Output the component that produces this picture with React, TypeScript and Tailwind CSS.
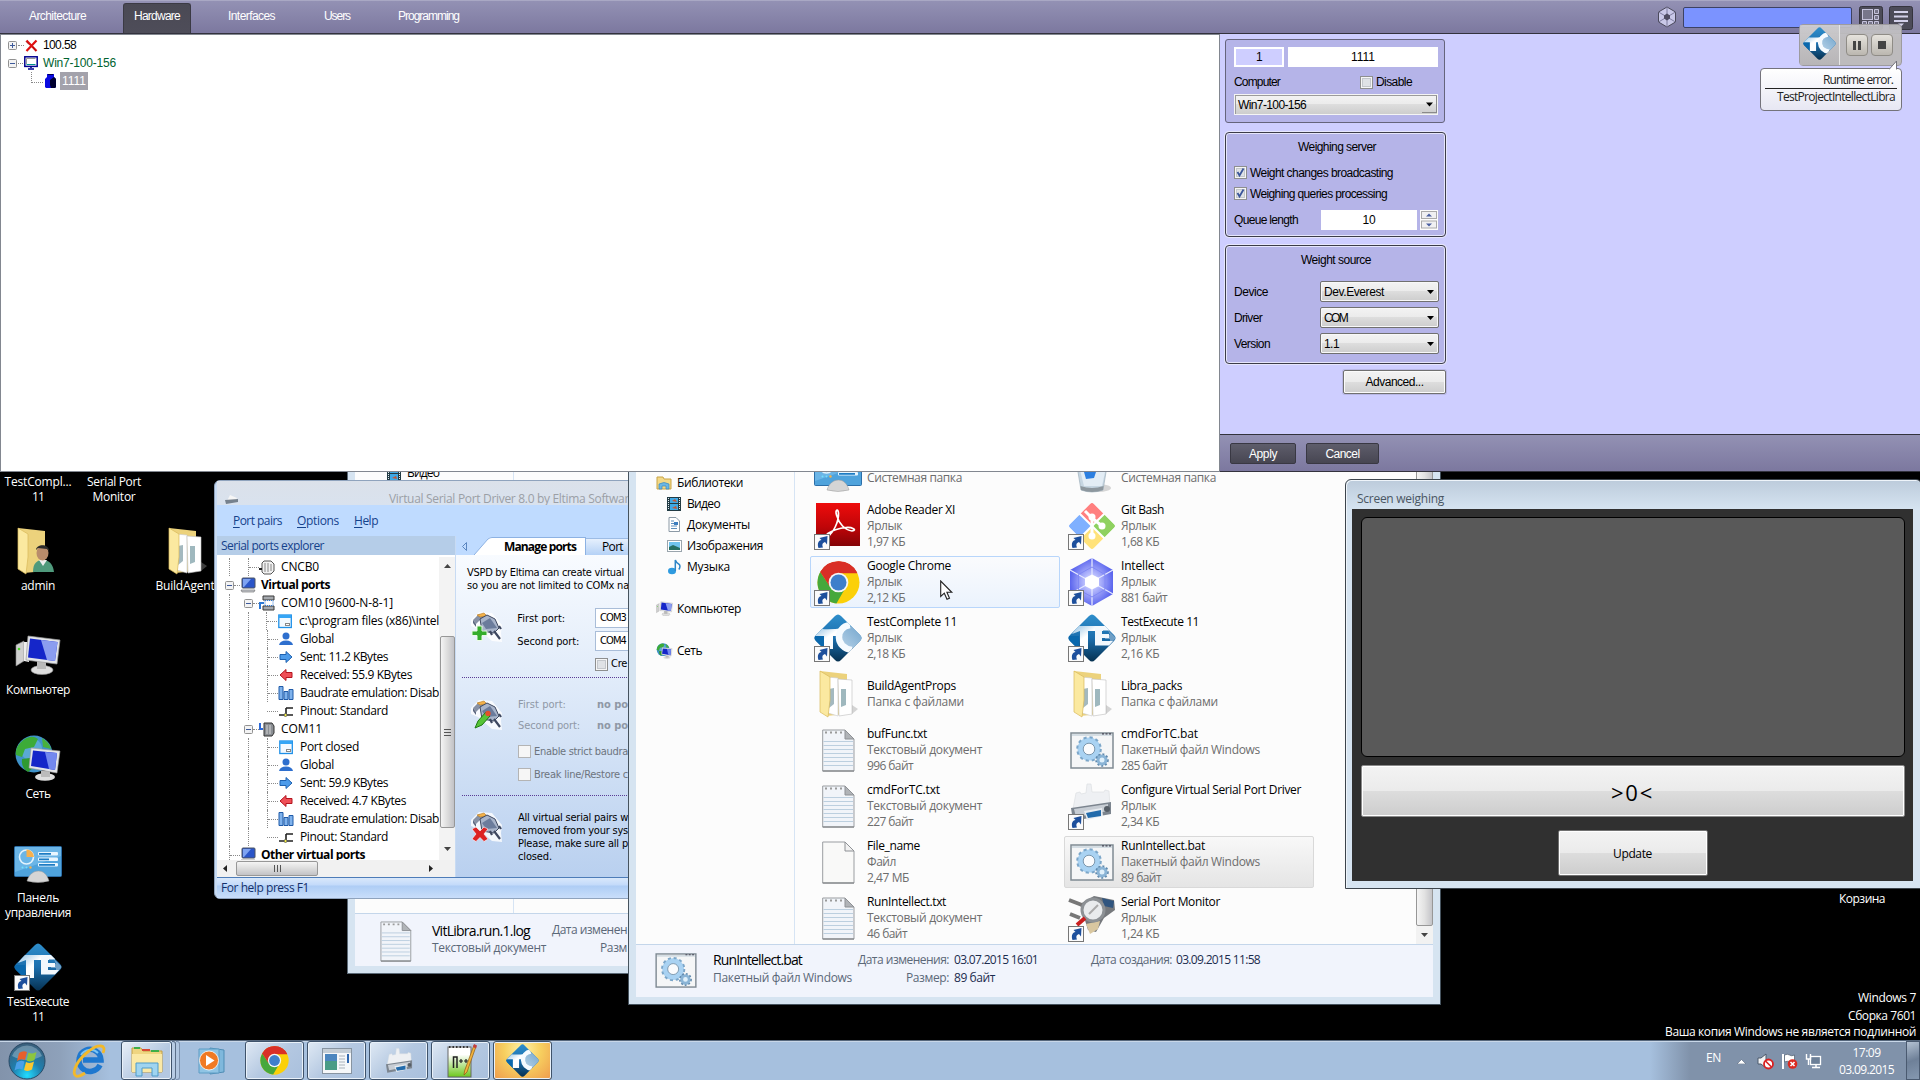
import React, { useLayoutEffect, useRef } from "react";

/* Text run whose tracking is adjusted so that it fills the width w. */
function T({ w, className = "", children }: { w: number; className?: string; children: string }) {
  const ref = useRef<HTMLSpanElement>(null);
  useLayoutEffect(() => {
    const el = ref.current;
    if (!el) return;
    el.style.letterSpacing = "0px";
    const natural = el.getBoundingClientRect().width;
    el.style.letterSpacing = `${(w - natural) / children.length}px`;
  }, [w, children]);
  return (
    <span ref={ref} className={`inline-block shrink-0 whitespace-pre ${className}`}>
      {children}
    </span>
  );
}

/* ---------- icons ---------- */

function Shortcut({ y = 33 }: { y?: number }) {
  return (
    <g transform={`translate(0.5 ${y - 0.5})`}>
      <rect width="15" height="15" fill="#fbfbfb" stroke="#777" />
      <path d="M4 13.500C2.500 9 4 6 7 5.500L5 3.500l8-2-.5 8.500-2-2.500C7.500 8.500 7.500 10.500 8.500 13z" fill="#1d4f9c" />
    </g>
  );
}

function TcLogo({ x = 0, y = 0, s = 48, letter = "C" }: { x?: number; y?: number; s?: number; letter?: "C" | "E" }) {
  return (
    <svg x={x} y={y} width={s} height={s} viewBox="0 0 48 48" className="shrink-0">
      <defs>
        <linearGradient id="tcg" x1="0" y1="0" x2="0" y2="1">
          <stop offset="0" stopColor="#2f8fcc" />
          <stop offset=".5" stopColor="#1c6fae" />
          <stop offset="1" stopColor="#06304f" />
        </linearGradient>
        <linearGradient id="tcw" x1="0" y1="0" x2="1" y2="1">
          <stop offset="0" stopColor="#8fbfe2" />
          <stop offset=".45" stopColor="#fff" />
          <stop offset="1" stopColor="#f4faff" />
        </linearGradient>
        <linearGradient id="tcr" x1="0" y1="1" x2="1" y2="0">
          <stop offset="0" stopColor="#b4d0e6" />
          <stop offset="1" stopColor="#6fa3cc" />
        </linearGradient>
        <clipPath id="tcc">
          <path d="M21 2Q24-1 27 2L46 21Q49 24 46 27L27 46Q24 49 21 46L2 27Q-1 24 2 21Z" />
        </clipPath>
      </defs>
      <g clipPath="url(#tcc)">
        <rect width="48" height="48" fill="url(#tcg)" />
        <path d="M0 22H11V36L0 26z" fill="#0a68ad" />
        {letter === "C" ? (
          <>
            <circle cx="39" cy="23" r="11" fill="url(#tcr)" />
            <path d="M0 22L8 15Q16 16 30 14L25 22H19V35H10V22Z" fill="url(#tcw)" />
            <path d="M36 11C21 13 21 34 38 36" fill="none" stroke="#f6fbff" strokeWidth="6.500" />
          </>
        ) : (
          <>
            <path d="M40 16L48 24 42 30V25H37V21H42z" fill="#6f9fc6" />
            <path d="M4 20L10 12H35V17H20V35H12V17Z" fill="url(#tcw)" />
            <path d="M27 12H41V16.500H34V20H41V24H34V27H45L41 31.500H27z" fill="#f2f8fd" />
          </>
        )}
      </g>
    </svg>
  );
}

function ChromeLogo({ x = 0, y = 0, s = 42 }: { x?: number; y?: number; s?: number }) {
  return (
    <svg x={x} y={y} width={s} height={s} viewBox="0 0 42 42" className="shrink-0">
      <circle cx="21" cy="21" r="20.500" fill="#fbd009" />
      <path d="M21 21L3.200 10.800A20.500 20.500 0 0 1 39.500 12H21z" fill="#d92f27" />
      <path d="M3.200 10.800A20.500 20.500 0 0 0 19 41.400L28 26 21 21 12 24z" fill="#46a83c" />
      <path d="M21 11.500H39.300A20.500 20.500 0 0 0 3.200 10.800L12.500 25z" fill="#d92f27" />
      <circle cx="21" cy="21" r="9.600" fill="#f4f6f8" />
      <circle cx="21" cy="21" r="7.800" fill="#3e7fcb" />
    </svg>
  );
}

function ControlPanelArt() {
  return (
    <g>
      <rect x=".5" y=".5" width="47" height="30" rx="1" fill="#4fa3dc" stroke="#2c6fa8" />
      <path d="M1 1H47V10L1 26z" fill="#7fc1ec" opacity=".6" />
      <circle cx="12.500" cy="11" r="7" fill="none" stroke="#e4f3fd" strokeWidth="1.600" />
      <path d="M12.500 11V3.500A7.500 7.500 0 0 1 20 11z" fill="#f6b04d" />
      <rect x="24" y="6" width="20" height="3.600" rx="1" fill="#e8f6ff" />
      <rect x="24" y="11.500" width="20" height="3.600" rx="1" fill="#e8f6ff" />
      <rect x="24" y="17" width="20" height="3.600" rx="1" fill="#e8f6ff" />
      <path d="M25 7.800H37M25 13.300H35M25 18.800H41" stroke="#1d7cc4" strokeWidth="1.800" />
      <circle cx="8.500" cy="21.500" r="1" fill="#6fe0ff" />
      <circle cx="12.500" cy="21.500" r="1" fill="#6fe0ff" />
      <circle cx="16.500" cy="21.500" r="1.200" fill="#f6b04d" />
      <path d="M13 35C15 28 20 25 24.500 25S33 28 35 35Q24 38 13 35z" fill="#d5d5d5" stroke="#999" strokeWidth=".5" />
    </g>
  );
}

function GearWindow({ w = 44, h = 37 }: { w?: number; h?: number }) {
  return (
    <svg width={w} height={h} viewBox="0 0 44 37" className="shrink-0">
      <rect x="1" y="1" width="42" height="35" fill="#f5f6f7" stroke="#7f8a93" strokeWidth="1.500" />
      <path d="M2 2H42V4H2z" fill="#d4dde3" />
      <path d="M32 1.800h2m1.500 0h2m1.500 0h2" stroke="#445" strokeWidth="1.200" />
      <circle cx="19" cy="17" r="8.500" fill="none" stroke="#a9d2f2" strokeWidth="6" />
      <circle cx="19" cy="17" r="11.800" fill="none" stroke="#7ba6c9" strokeWidth="2" strokeDasharray="3.200 3" />
      <circle cx="19" cy="17" r="5.800" fill="#fafbfd" stroke="#7c97ad" />
      <circle cx="32" cy="28" r="4" fill="#dff0fb" stroke="#8ab4d6" strokeWidth="3" />
      <circle cx="32" cy="28" r="6" fill="none" stroke="#5f89ad" strokeWidth="1.600" strokeDasharray="2 2" />
    </svg>
  );
}

function NotePage({ lines = true, w = 33, h = 43 }: { lines?: boolean; w?: number; h?: number }) {
  return (
    <svg width={w} height={h} viewBox="0 0 33 43" className="shrink-0">
      <path d="M.7 1H23L32 10V42H.7z" fill={lines ? "#f1f4f9" : "#f9f9f8"} stroke="#9a9da1" />
      {lines && (
        <>
          <path d="M1.500 12.500H31M1.500 16.500H31M1.500 20.500H31M1.500 24.500H31M1.500 28.500H31M1.500 32.500H31M1.500 36.500H31" stroke="#bccfdf" />
          <path d="M3 3.500H22" stroke="#9a9a9a" strokeWidth="2" strokeDasharray="2 3" />
        </>
      )}
      <path d="M23 1V10H32z" fill={lines ? "#b0b3b7" : "#f1f1f1"} stroke="#8e9195" />
      <path d="M.7 42H32" stroke="#85888c" strokeWidth="1.300" />
    </svg>
  );
}

function FolderOpen({ user = false }: { user?: boolean }) {
  return (
    <svg width="44" height="48" viewBox="0 0 44 48" className="shrink-0">
      <path d="M4 1L31 4V44L10 46z" fill="#ecd27c" />
      {!user && (
        <>
          <path d="M11 7L22 8V46L12 43z" fill="#fff" stroke="#c9c9c9" strokeWidth=".6" />
          <path d="M13 19L18 18V34L13 38z" fill="#a4b9bf" />
          <path d="M22 9L36 10V44L23 46z" fill="#fff" stroke="#bdbdbd" strokeWidth=".6" />
          <path d="M25 19L30 19V35L25 37z" fill="#9fb8be" />
          <path d="M36 44L42 39 36 35z" fill="#999" opacity=".4" />
        </>
      )}
      <path d="M4 1L14 7V30L12 47 4 42z" fill="#fbe9a0" stroke="#d9b95a" strokeWidth=".7" />
      {user && (
        <>
          <path d="M19 45C19 36 23 33 29 33S39 37 40 45z" fill="#4f9a7c" />
          <path d="M25 33L29 39 33 33z" fill="#eee" />
          <ellipse cx="28.500" cy="26" rx="6" ry="7.500" fill="#b98c6b" />
          <path d="M22 23C22 17 35 16 35 24L33 22 24 21z" fill="#2b2b2b" />
        </>
      )}
    </svg>
  );
}

function ComputerArt() {
  return (
    <g>
      <path d="M1 10L9 6V26L1 31z" fill="#cfcfcf" stroke="#888" strokeWidth=".6" />
      <path d="M9 7L14 7V27L9 26z" fill="#eee" />
      <circle cx="4" cy="14" r="1.300" fill="#4ed42c" />
      <ellipse cx="27" cy="35" rx="11" ry="4.500" fill="#dedede" stroke="#999" strokeWidth=".6" />
      <path d="M22 26H31V34H22z" fill="#b9b9b9" />
      <path d="M13 1L45 5 42 29 11 25z" fill="#e3e5e8" stroke="#9a9a9a" strokeWidth=".7" />
      <path d="M15 3.500L42.500 7 40 26 13 22.500z" fill="#1526c9" />
      <path d="M26 5L42.500 7 40 26 32 25z" fill="#8b9df0" />
    </g>
  );
}

function NetworkArt() {
  return (
    <g>
      <circle cx="20" cy="19" r="18.500" fill="#3f92c9" />
      <circle cx="17" cy="14" r="11" fill="#75bfe0" opacity=".5" />
      <path d="M6 8Q16-2 24 4L20 12 11 14 8 22 2 20Q1 14 6 8z" fill="#3cab38" />
      <path d="M28 3Q36 8 37 14L29 12z" fill="#48b03c" />
      <path d="M8 24L16 23 19 33 14 37Q7 33 8 24z" fill="#2f9a31" />
      <ellipse cx="31" cy="42" rx="10" ry="3.800" fill="#dedede" />
      <path d="M27 36H36V42H27z" fill="#bbb" />
      <path d="M17 13L46 16 43 38 15 33z" fill="#e3e5e8" stroke="#999" strokeWidth=".6" />
      <path d="M19 15.500L43 18 41 35 17 31z" fill="#1526c9" />
      <path d="M31 17L43 18 41 35 35 34z" fill="#7388ee" />
    </g>
  );
}

function SerialPlug({ kind }: { kind: "add" | "edit" | "del" }) {
  return (
    <svg width="33" height="33" viewBox="0 0 33 33" className="shrink-0">
      <path d="M1 9L9 1 22 2 32 14 31 22 32 31 22 30 8 18 1 15z" fill="#fff" opacity=".8" />
      <path d="M3 9L9 3 14 5 6 13z" fill="#8791a5" />
      <path d="M3 9L6 13V16L3 12z" fill="#5d6880" />
      <path d="M7 4L14 2 17 5 10 6z" fill="#f2b04a" stroke="#b97b1e" strokeWidth=".6" />
      <path d="M10 8L17 4 25 8 29 17 24 22 12 20z" fill="#a8b4ca" stroke="#3e4860" />
      <path d="M12 12L20 7 27 17 16 18z" fill="#6b7c9c" />
      <path d="M24 20L30 28M20 20L22 24M29 15L31 18" stroke="#3e4860" strokeWidth="2.200" />
      {kind === "add" && <path d="M7 15h5v5h5v4.500h-5v5H7v-5H2V20h5z" fill="#35ad2b" stroke="#eafbe6" />}
      {kind === "edit" && (
        <>
          <path d="M5 29L8 22 16 13 20 17 12 26z" fill="#57c437" stroke="#1f7a12" />
          <circle cx="18" cy="14.500" r="2.700" fill="#e2502a" />
        </>
      )}
      {kind === "del" && <path d="M2 18l4-2 4 4 4-4 4 2-4 5 4 5-4 2.500-4-4-4 4-4-2.500 4-5z" fill="#dc2222" stroke="#fff" strokeWidth=".6" />}
    </svg>
  );
}

function SerialArt() {
  return (
    <g>
      <path d="M19 2L23 2 24 10 36 10 37 8 41 9 42 25 5 27 8 11 12 10 13 12 18 11z" fill="#eef0f3" stroke="#dcdfe3" strokeWidth=".7" />
      <path d="M3 26L43 20V32L5 39z" fill="#7c858f" />
      <path d="M6 27L40 22V29L8 35z" fill="#c7cdd4" />
      <path d="M16 29L34 26 35 34 19 38z" fill="#e8ecf0" />
      <path d="M18 31L33 28 33 34 20 36z" fill="#236bab" />
      <circle cx="39" cy="27" r="3" fill="#555d66" />
    </g>
  );
}

function FileIcon({ kind }: { kind: string }) {
  if (kind === "folder") return <FolderOpen />;
  if (kind === "note") return <NotePage />;
  if (kind === "blank") return <NotePage lines={false} />;
  if (kind === "bat") return <GearWindow />;
  return (
    <svg width="48" height="48" viewBox="0 0 48 48" className="shrink-0">
      {kind === "cpl" && (
        <g transform="translate(0 9)">
          <ControlPanelArt />
        </g>
      )}
      {kind === "bin" && (
        <g>
          <ellipse cx="30" cy="42" rx="13" ry="4" fill="#bbb" opacity=".6" />
          <path d="M8 14H40L35 44Q24 48 13 44z" fill="#c6d6e2" stroke="#9fb0bc" strokeWidth=".7" />
          <path d="M12 24L24 17 37 26 34 40 16 40z" fill="#e3edf5" />
          <path d="M16 26l7-3 5 3-2 6-8 1z" fill="#2c7fe0" />
          <path d="M12.500 40Q24 44 35.500 40L35 44Q24 48 13 44z" fill="#8d979e" />
        </g>
      )}
      {kind === "adobe" && (
        <>
          <linearGradient id="adb" x1="0" y1="0" x2="0" y2="1">
            <stop offset="0" stopColor="#ee0c0c" />
            <stop offset=".55" stopColor="#c00508" />
            <stop offset="1" stopColor="#830306" />
          </linearGradient>
          <rect x="2" y="1" width="44" height="43" fill="url(#adb)" />
          <path d="M14 34C19 31 25 20 24.500 11C24 6 21 8 22.500 13C25 22 31 28 38 29C44 28 38 25 32 25.500C25 26 17 29 14 31.500C10 35 14 36 17 31" fill="none" stroke="#fff" strokeWidth="1.700" />
          <Shortcut />
        </>
      )}
      {kind === "chrome" && (
        <>
          <ChromeLogo x={3} y={3} s={43} />
          <Shortcut />
        </>
      )}
      {kind === "tc" && (
        <>
          <TcLogo />
          <Shortcut />
        </>
      )}
      {kind === "te" && (
        <>
          <TcLogo letter="E" />
          <Shortcut />
        </>
      )}
      {kind === "git" && (
        <>
          <clipPath id="gitc">
            <rect x="7" y="7" width="34" height="34" rx="3" transform="rotate(45 24 24)" />
          </clipPath>
          <g clipPath="url(#gitc)">
            <rect width="48" height="48" fill="#fff" />
            <g transform="rotate(45 24 24)">
              <rect x="7" y="7" width="16" height="16" fill="#ff8080" />
              <rect x="25" y="7" width="16" height="16" fill="#8fd160" />
              <rect x="7" y="25" width="16" height="16" fill="#7fb0ff" />
              <rect x="25" y="25" width="16" height="16" fill="#ffe27a" />
            </g>
            <path d="M17 9L24 16V34M24 16L34 24" stroke="#fff" strokeWidth="3" fill="none" />
            <circle cx="24" cy="15" r="3.500" fill="#fff" />
            <circle cx="24" cy="34" r="3.500" fill="#fff" />
            <circle cx="34" cy="24" r="3.500" fill="#fff" />
          </g>
          <Shortcut />
        </>
      )}
      {kind === "intellect" && (
        <>
          <radialGradient id="ing">
            <stop offset=".25" stopColor="#c3c7ff" />
            <stop offset="1" stopColor="#5c66ee" />
          </radialGradient>
          <path d="M24 0L45 12V36L24 48 2 36V12z" fill="url(#ing)" />
          <path d="M24 0V48M2 12L45 36M2 36L45 12" stroke="#e4e7ff" strokeWidth="1.300" />
          <path d="M24 9L37 16.500V31.500L24 39 10.500 31.500V16.500z" fill="none" stroke="#8088f4" />
          <path d="M24 16.500L31 20V28L24 31.500 17 28V20z" fill="#fff" />
          <Shortcut />
        </>
      )}
      {kind === "serial" && (
        <>
          <SerialArt />
          <Shortcut />
        </>
      )}
      {kind === "monitor" && (
        <>
          <path d="M12 10L26 2 46 6 47 16 36 24 28 38 20 36z" fill="#76797d" />
          <path d="M34 4L46 7 45 14 36 12z" fill="#30557f" />
          <path d="M1 6L14 11M2 20L12 24" stroke="#777" strokeWidth="4" />
          <path d="M18 30L32 27 30 35 22 40z" fill="#d9c7a0" />
          <circle cx="25" cy="16" r="11" fill="#e9ebed" stroke="#8d9195" strokeWidth="3" />
          <path d="M21 20L30 11" stroke="#aaa" strokeWidth="2" />
          <path d="M17 24L9 31" stroke="#c91e1e" strokeWidth="4" />
          <Shortcut />
        </>
      )}
    </svg>
  );
}

/* ---------- Intellect window ---------- */

const uiFont = "font-['Liberation_Sans',sans-serif] text-[12px]";
const segoe = "font-['Open_Sans','Noto_Sans',sans-serif] text-[12px]";
const btnGrad = "bg-[linear-gradient(#f3f3f3,#ebebeb_49%,#dddddd_50%,#cdcdcd)]";

function Box({ open }: { open: boolean }) {
  return (
    <svg width="9" height="9" viewBox="0 0 9 9" className="shrink-0">
      <rect x=".5" y=".5" width="8" height="8" rx="1" fill="#f3f3f3" stroke="#919191" />
      <path d={open ? "M2 4.500h5" : "M2 4.500h5M4.500 2v5"} stroke="#3d5a9b" />
    </svg>
  );
}

function Check({ on, flat }: { on?: boolean; flat?: boolean }) {
  return (
    <svg width="13" height="13" viewBox="0 0 13 13" className="shrink-0">
      <rect x=".5" y=".5" width="12" height="12" fill="#f6f6f6" stroke={flat ? "#b4b4b4" : "#8e8f8f"} />
      {!flat && <rect x="2.500" y="2.500" width="8" height="8" fill="#dfe2e6" stroke="#c3c7cc" />}
      {on && <path d="M3.500 6L5.500 9.500 9.500 2.500" fill="none" stroke="#3a559a" strokeWidth="1.800" />}
    </svg>
  );
}

function Combo({ text, w }: { text: string; w: number }) {
  return (
    <div className={`flex h-[21px] w-[119px] items-center justify-between rounded-[2px] border border-[#707070] pl-[3px] pr-1 shadow-[inset_0_0_0_1px_#f8f8f8] ${btnGrad}`}>
      <T w={w}>{text}</T>
      <svg width="7" height="4" viewBox="0 0 7 4">
        <path d="M0 0h7L3.500 4z" fill="#000" />
      </svg>
    </div>
  );
}

function IntellectWindow() {
  return (
    <div className={`absolute left-0 top-0 flex h-[472px] w-[1920px] flex-col ${uiFont}`}>
      <header className="flex h-[34px] items-start border-b border-[#33323d] border-t border-t-[#a9a8c4] bg-[linear-gradient(#9391b4,#7c789f)] text-white">
        <nav className="flex h-full">
          <div className="w-[123px] pl-[29px] pt-[6px]"><T w={57}>Architecture</T></div>
          <div className="mt-[2px] w-[68px] rounded-t-[3px] border border-b-0 border-[#3b3a44] bg-[linear-gradient(#4a4954,#4e4d59)] pl-[10px] pt-[3px]"><T w={46}>Hardware</T></div>
          <div className="pl-[37px] pt-[6px]"><T w={47}>Interfaces</T></div>
          <div className="pl-[49px] pt-[6px]"><T w={26}>Users</T></div>
          <div className="pl-[48px] pt-[6px]"><T w={61}>Programming</T></div>
        </nav>
        <div className="ml-auto flex items-start pr-[7px] pt-[5px]">
          <svg width="20" height="22" viewBox="0 0 20 22" className="mr-[6px]">
            <path d="M10 1L18.500 6V16L10 21 1.500 16V6z" fill="#c9c8e8" stroke="#4b4a5c" />
            <path d="M10 1V21M1.500 6L18.500 16M1.500 16L18.500 6" stroke="#7f7da0" />
            <path d="M10 7.500L13 9.500V12.500L10 14.500 7 12.500V9.500z" fill="#4e4c62" />
          </svg>
          <div className="mt-[1px] h-[21px] w-[169px] rounded-[2px] border border-[#3d4263] bg-[#7b93ff]" />
          <svg width="24" height="24" viewBox="0 0 24 24" className="ml-[7px]">
            <rect x=".5" y=".5" width="23" height="23" rx="2" fill="#4c4b58" stroke="#35343e" />
            <g fill="#77768a" stroke="#c5c3dc">
              <rect x="3.500" y="3.500" width="10" height="10" />
              <path d="M15.500 3.500h4v4h-4zM15.500 9.500h4v4h-4zM3.500 15.500h4v4h-4zM9.500 15.500h4v4h-4zM15.500 15.500h4v4h-4z" />
            </g>
          </svg>
          <svg width="24" height="24" viewBox="0 0 24 24" className="ml-[6px]">
            <rect x=".5" y=".5" width="23" height="23" rx="2" fill="#4c4b58" stroke="#35343e" />
            <path d="M5 6h14M5 10.500h14M5 15h14" stroke="#d3d1ea" strokeWidth="2" />
            <path d="M9 17.500h6L12 20.500z" fill="#d3d1ea" />
          </svg>
        </div>
      </header>
      <div className="flex h-[438px]">
        <div className="flex w-[1220px] flex-col border border-[#828790] bg-white pt-[1px]">
          <div className="flex h-[18px] items-center pl-[7px] text-black">
            <Box open={false} />
            <span className="mx-[1px] w-[6px] border-t border-dotted border-[#888]" />
            <svg width="13" height="13" viewBox="0 0 13 13" className="mr-[5px]">
              <path d="M1.500 1.500L11.500 12M11.500 1.500L1.500 12" stroke="#e01010" strokeWidth="2.200" />
              <path d="M1 2.500L4 5.500M8 8L11 12" stroke="#8c0808" strokeWidth=".7" />
            </svg>
            <T w={33}>100.58</T>
          </div>
          <div className="flex h-[18px] items-center pl-[7px] text-[#00632f]">
            <Box open />
            <span className="mx-[1px] w-[5px] border-t border-dotted border-[#888]" />
            <svg width="14" height="14" viewBox="0 0 14 14" className="mr-[5px]">
              <rect x=".8" y=".8" width="12.400" height="9.600" fill="#fff" stroke="#000090" strokeWidth="1.500" />
              <path d="M2.500 8.500h9" stroke="#009090" />
              <path d="M2.500 8V2.500h9" stroke="#999" fill="none" />
              <path d="M7 10v2M4 13h6" stroke="#000090" strokeWidth="1.600" />
            </svg>
            <T w={73}>Win7-100-156</T>
          </div>
          <div className="flex h-[18px] items-center pl-[30px]">
            <span className="mb-[7px] h-[11px] w-[12px] border-b border-l border-dotted border-[#888]" />
            <svg width="11" height="14" viewBox="0 0 11 14" className="ml-[2px]">
              <path d="M2 0h7v3l2 2v8l-1 1H1l-1-1V5l2-2z" fill="#0a0ae0" />
              <path d="M9 3l2 2v8l-1 1H6l-1-3V6z" fill="#00002e" />
              <path d="M3 .5h5" stroke="#000050" />
            </svg>
            <span className="ml-[4px] flex h-[18px] w-[28px] items-center justify-center bg-[#a3a2ab] text-white"><T w={24}>1111</T></span>
          </div>
        </div>
        <div className="flex flex-1 flex-col bg-[#ceceff] text-black">
          <div className="flex h-[400px] flex-col pl-[5px] pt-[5px]">
            <section className="flex h-[84px] w-[220px] flex-col rounded-[3px] border border-[#65647c] bg-[#b5b4e8] pl-[8px] pt-[7px]">
              <div className="flex gap-[4px]">
                <div className="flex h-[20px] w-[50px] items-center justify-center border-2 border-white bg-[#ceceff]"><T w={6}>1</T></div>
                <div className="flex h-[20px] w-[150px] items-center justify-center bg-white"><T w={24}>1111</T></div>
              </div>
              <div className="flex h-[27px] items-center pt-[3px]">
                <div className="w-[126px]"><T w={46}>Computer</T></div>
                <Check />
                <div className="pl-[3px]"><T w={36}>Disable</T></div>
              </div>
              <div className={`flex h-[21px] w-[204px] items-center border border-[#f4f4f4] pl-[3px] shadow-[inset_1px_1px_0_#9b9b9b] ${btnGrad}`}>
                <T w={68}>Win7-100-156</T>
                <span className="ml-auto flex h-[17px] w-[15px] items-center justify-center border-b border-r border-[#8a8a8a]">
                  <svg width="7" height="5" viewBox="0 0 7 4"><path d="M0 0h7L3.500 4z" /></svg>
                </span>
              </div>
            </section>
            <section className="mt-[9px] flex h-[105px] w-[221px] flex-col rounded-[4px] border border-[#3c3c48] bg-[#b5b4e8] pl-[8px] shadow-[inset_0_0_0_1px_#e6e6fb,0_0_0_1px_#e6e6fb]">
              <div className="mt-[7px] flex h-[14px] items-center justify-center pr-[5px]"><T w={78}>Weighing server</T></div>
              <div className="mt-[12px] flex h-[13px] items-center gap-[3px]"><Check on /><T w={143}>Weight changes broadcasting</T></div>
              <div className="mt-[8px] flex h-[13px] items-center gap-[3px]"><Check on /><T w={137}>Weighing queries processing</T></div>
              <div className="mt-[10px] flex h-[20px] items-center">
                <div className="w-[87px]"><T w={64}>Queue length</T></div>
                <div className="flex h-[20px] w-[96px] items-center justify-center bg-white"><T w={13}>10</T></div>
                <svg width="18" height="20" viewBox="0 0 18 20" className="ml-[3px]">
                  <rect width="18" height="20" fill="#fdfdfd" />
                  <rect x="1.500" y="1.500" width="15" height="7" fill="#f0f0f2" stroke="#aaa" />
                  <rect x="1.500" y="11" width="15" height="7" fill="#f0f0f2" stroke="#aaa" />
                  <path d="M6 6.500h6L9 3.500zM6 13.500h6L9 16.500z" fill="#4a5fa0" />
                </svg>
              </div>
            </section>
            <section className="mt-[8px] flex h-[119px] w-[221px] flex-col rounded-[4px] border border-[#3c3c48] bg-[#b5b4e8] pl-[8px] shadow-[inset_0_0_0_1px_#e6e6fb,0_0_0_1px_#e6e6fb]">
              <div className="mb-[14px] mt-[7px] flex h-[14px] items-center justify-center pr-[7px]"><T w={70}>Weight source</T></div>
              <div className="flex h-[26px]"><div className="w-[86px] pt-[2px]"><T w={34}>Device</T></div><Combo text="Dev.Everest" w={60} /></div>
              <div className="flex h-[26px]"><div className="w-[86px] pt-[2px]"><T w={28}>Driver</T></div><Combo text="COM" w={23} /></div>
              <div className="flex h-[26px]"><div className="w-[86px] pt-[2px]"><T w={36}>Version</T></div><Combo text="1.1" w={15} /></div>
            </section>
            <button className={`ml-[118px] mt-[6px] flex h-[24px] w-[103px] items-center justify-center rounded-[2px] border border-[#707070] shadow-[inset_0_0_0_1px_#fbfbfb,0_0_0_1px_#b9b8e4] ${btnGrad}`}><T w={58}>Advanced...</T></button>
          </div>
          <footer className="flex h-[38px] items-start gap-[10px] border-y border-t-[#33323d] border-b-[#33323d] bg-[linear-gradient(#9391b4,#7c789f)] pl-[10px] pt-[8px] text-white">
            <button className="flex h-[21px] w-[66px] items-center justify-center rounded-[2px] border border-[#393843] bg-[linear-gradient(#5e5d6b,#474652)]"><T w={28}>Apply</T></button>
            <button className="flex h-[21px] w-[73px] items-center justify-center rounded-[2px] border border-[#393843] bg-[linear-gradient(#5e5d6b,#474652)]"><T w={34}>Cancel</T></button>
          </footer>
        </div>
      </div>
    </div>
  );
}

function TestRunnerWidget() {
  return (
    <div className={`absolute left-[1760px] top-[24px] flex w-[142px] flex-col items-end ${segoe}`}>
      <div className="flex h-[42px] w-[103px] items-center rounded-[4px] border border-[#9d9b9e] bg-[linear-gradient(#c4c3c6e6,#bdbbbd_14px)]">
        <div className="flex h-full w-[40px] items-start justify-center border-r border-[#e6e6e6] bg-[linear-gradient(#d4d3d5a0,#b7b5b7)] pt-[2px]"><TcLogo s={33} /></div>
        <div className="flex gap-[3px] pl-[6px]">
          <span className="flex h-[22px] w-[22px] items-center justify-center gap-[2px] rounded-[4px] border border-[#8f8c86] bg-[linear-gradient(#e6e3dd,#bbb7b0)]">
            <i className="h-[9px] w-[3px] bg-[#444]" /><i className="h-[9px] w-[3px] bg-[#444]" />
          </span>
          <span className="flex h-[22px] w-[22px] items-center justify-center rounded-[4px] border border-[#8f8c86] bg-[linear-gradient(#e6e3dd,#bbb7b0)]"><i className="h-[8px] w-[8px] bg-[#444]" /></span>
        </div>
      </div>
      <div className="relative mt-[2px] flex h-[43px] w-[142px] flex-col items-end rounded-[4px] border border-[#74737b] bg-[linear-gradient(#ffffff,#e7e7f3)] px-[4px] text-[#222]">
        <svg width="9" height="9" viewBox="0 0 9 9" className="absolute -top-[8px] right-[3px]"><path d="M0 8.500L7.500 0V8.500" fill="#fff" stroke="#74737b" /></svg>
        <div className="flex h-[20px] w-full items-center justify-end border-b border-[#222] pr-[4px] pt-[2px]"><T w={70}>Runtime error.</T></div>
        <div className="flex h-[16px] items-center pr-[2px]"><T w={118}>TestProjectIntellectLibra</T></div>
      </div>
    </div>
  );
}

/* ---------- desktop ---------- */

function DesktopItem({ pos, lines, children }: { pos: string; lines: [string, number][]; children?: React.ReactNode }) {
  return (
    <div className={`absolute flex w-[76px] flex-col items-center text-white ${segoe} ${pos}`}>
      {children}
      {lines.map(([t, w]) => (
        <div key={t} className="h-[15px] leading-[15px]"><T w={w}>{t}</T></div>
      ))}
    </div>
  );
}

function Desktop() {
  return (
    <>
      <DesktopItem pos="left-[0px] top-[474px]" lines={[["TestCompl...", 67], ["11", 12]]} />
      <DesktopItem pos="left-[76px] top-[474px]" lines={[["Serial Port", 54], ["Monitor", 43]]} />
      <DesktopItem pos="left-[0px] top-[527px]" lines={[["admin", 34]]}><div className="h-[51px] w-[48px]"><FolderOpen user /></div></DesktopItem>
      <DesktopItem pos="left-[147px] top-[527px]" lines={[["BuildAgent", 59]]}><div className="h-[51px] pl-[4px]"><FolderOpen /></div></DesktopItem>
      <DesktopItem pos="left-[0px] top-[635px]" lines={[["Компьютер", 64]]}><svg width="46" height="43" viewBox="0 0 46 43" className="mb-[4px]"><ComputerArt /></svg></DesktopItem>
      <DesktopItem pos="left-[0px] top-[735px]" lines={[["Сеть", 25]]}><svg width="48" height="47" viewBox="0 0 48 47" className="mb-[4px]"><NetworkArt /></svg></DesktopItem>
      <DesktopItem pos="left-[0px] top-[846px]" lines={[["Панель", 42], ["управления", 66]]}><svg width="48" height="40" viewBox="0 0 48 40" className="mb-[4px]"><ControlPanelArt /></svg></DesktopItem>
      <DesktopItem pos="left-[0px] top-[943px]" lines={[["TestExecute", 62], ["11", 12]]}><div className="h-[51px]"><FileIcon kind="te" /></div></DesktopItem>
      <DesktopItem pos="left-[1824px] top-[891px]" lines={[["Корзина", 46]]} />
      <div className={`absolute right-[4px] top-[989px] flex flex-col items-end text-white ${segoe}`}>
        <div className="h-[18px] leading-[18px]"><T w={58}>Windows 7</T></div>
        <div className="h-[18px] leading-[18px]"><T w={68}>Сборка 7601</T></div>
        <div className="h-[14px] leading-[14px]"><T w={251}>Ваша копия Windows не является подлинной</T></div>
      </div>
    </>
  );
}

/* ---------- explorer windows ---------- */

function NavVideo({ s = 14 }: { s?: number }) {
  return (
    <svg width={s} height={s} viewBox="0 0 14 14">
      <rect width="14" height="14" fill="#223b44" />
      <path d="M3 1h8v5H3zM3 7h8v6H3z" fill="#3fa9e6" />
      <path d="M5 4l3-2 2 3zM5 11l4-2 1 3z" fill="#c9542f" />
      <path d="M1.500 1v12M12.500 1v12" stroke="#e6eef2" strokeDasharray="1 1" />
    </svg>
  );
}

function BackExplorer() {
  return (
    <div className={`absolute left-[347px] top-[440px] flex h-[534px] w-[281px] flex-col border border-r-0 border-[#5c6a77] bg-[#d6e4f1] pb-[7px] pl-[7px] ${segoe}`}>
      <div className="flex h-[472px] bg-[#fcfcfc] pt-[26px]">
        <div className="flex w-[159px] items-start border-r border-[#d6e4f4] pl-[32px]">
          <NavVideo />
          <div className="-mt-[3px] pl-[6px] text-black"><T w={32}>Видео</T></div>
        </div>
      </div>
      <div className="flex flex-1 border-t border-[#c4d6ea] bg-[#f1f4fc] pl-[25px] pt-[7px]">
        <NotePage w={32} h={41} />
        <div className="flex flex-col pl-[20px]">
          <div className="flex h-[18px] items-center text-[14px] text-black"><T w={98}>VitLibra.run.1.log</T></div>
          <div className="flex h-[17px] items-center text-[#5b6878]"><T w={114}>Текстовый документ</T></div>
        </div>
        <div className="flex flex-col text-[#5b6878]">
          <div className="flex h-[18px] items-center pl-[6px]"><T w={75}>Дата изменен</T></div>
          <div className="flex h-[17px] items-center pl-[54px]"><T w={27}>Разм</T></div>
        </div>
      </div>
    </div>
  );
}

type FileRow = { kind: string; lines: [string, number][]; state?: "hover" | "sel" };
const leftFiles: FileRow[] = [
  { kind: "cpl", lines: [["Панель управления", 104], ["Системная папка", 95]] },
  { kind: "adobe", lines: [["Adobe Reader XI", 88], ["Ярлык", 35], ["1,97 КБ", 38]] },
  { kind: "chrome", lines: [["Google Chrome", 84], ["Ярлык", 35], ["2,12 КБ", 38]], state: "hover" },
  { kind: "tc", lines: [["TestComplete 11", 90], ["Ярлык", 35], ["2,18 КБ", 38]] },
  { kind: "folder", lines: [["BuildAgentProps", 89], ["Папка с файлами", 97]] },
  { kind: "note", lines: [["bufFunc.txt", 60], ["Текстовый документ", 115], ["996 байт", 46]] },
  { kind: "note", lines: [["cmdForTC.txt", 73], ["Текстовый документ", 115], ["227 байт", 46]] },
  { kind: "blank", lines: [["File_name", 53], ["Файл", 29], ["2,47 МБ", 42]] },
  { kind: "note", lines: [["RunIntellect.txt", 79], ["Текстовый документ", 115], ["46 байт", 40]] },
];
const rightFiles: FileRow[] = [
  { kind: "bin", lines: [["Корзина", 46], ["Системная папка", 95]] },
  { kind: "git", lines: [["Git Bash", 43], ["Ярлык", 35], ["1,68 КБ", 38]] },
  { kind: "intellect", lines: [["Intellect", 43], ["Ярлык", 35], ["881 байт", 46]] },
  { kind: "te", lines: [["TestExecute 11", 78], ["Ярлык", 35], ["2,16 КБ", 38]] },
  { kind: "folder", lines: [["Libra_packs", 61], ["Папка с файлами", 97]] },
  { kind: "bat", lines: [["cmdForTC.bat", 77], ["Пакетный файл Windows", 139], ["285 байт", 46]] },
  { kind: "serial", lines: [["Configure Virtual Serial Port Driver", 180], ["Ярлык", 35], ["2,34 КБ", 38]] },
  { kind: "bat", lines: [["RunIntellect.bat", 84], ["Пакетный файл Windows", 139], ["89 байт", 40]], state: "sel" },
  { kind: "monitor", lines: [["Serial Port Monitor", 99], ["Ярлык", 35], ["1,24 КБ", 38]] },
];

function FileColumn({ files }: { files: FileRow[] }) {
  return (
    <div className="flex w-[250px] flex-col gap-[4px]">
      {files.map((f, i) => (
        <div
          key={i}
          className={`flex h-[52px] w-[250px] items-center rounded-[2px] border ${
            f.state === "hover"
              ? "border-[#b8d6fb] bg-[linear-gradient(#fafbfd,#ebf3fd)]"
              : f.state === "sel"
                ? "border-[#d9d9d9] bg-[linear-gradient(#f8f8f8,#e5e5e5)]"
                : "border-transparent"
          }`}
        >
          <div className="flex w-[54px] items-center justify-center"><FileIcon kind={f.kind} /></div>
          <div className="flex flex-col pl-[2px]">
            {f.lines.map(([t, w], j) => (
              <div key={j} className={`h-[16px] leading-[16px] ${j ? "text-[#6d6d6d]" : "text-black"}`}><T w={w}>{t}</T></div>
            ))}
          </div>
        </div>
      ))}
    </div>
  );
}

function NavRow({ icon, text, w, sub }: { icon: React.ReactNode; text: string; w: number; sub?: boolean }) {
  return (
    <div className={`flex h-[21px] items-center text-black ${sub ? "pl-[31px]" : "pl-[20px]"}`}>
      <span className={sub ? "w-[20px]" : "w-[21px]"}>{icon}</span>
      <T w={w}>{text}</T>
    </div>
  );
}

function MainExplorer() {
  return (
    <div className={`absolute left-[628px] top-[440px] flex h-[565px] w-[813px] flex-col border border-[#46535e] bg-[#d6e4f1] pb-[7px] pl-[7px] pr-[7px] ${segoe}`}>
      <div className="flex h-[503px] overflow-hidden bg-[#fcfcfc]">
        <div className="flex w-[159px] flex-col border-r border-[#d6e4f4] pt-[31px]">
          <NavRow text="Библиотеки" w={66} icon={<svg width="16" height="14" viewBox="0 0 16 14"><path d="M1 1h6l1 2h7v10H1z" fill="#f3d987" stroke="#c9a445" /><path d="M3 8q5-3 10 0v5h-3v-3H6v3H3z" fill="#6cb7e4" stroke="#3c89bd" strokeWidth=".7" /></svg>} />
          <NavRow sub text="Видео" w={33} icon={<NavVideo />} />
          <NavRow sub text="Документы" w={63} icon={<svg width="14" height="15" viewBox="0 0 14 15"><path d="M2 .5h7l3.500 3.500v10.500H2z" fill="#fff" stroke="#8c9aa6" /><path d="M4 4h3M4 6.500h3M4 9h6M4 11.500h6" stroke="#5e8fbd" /><rect x="7" y="5" width="4" height="3" fill="#3d7fc0" /></svg>} />
          <NavRow sub text="Изображения" w={76} icon={<svg width="15" height="12" viewBox="0 0 15 12"><rect x=".5" y=".5" width="14" height="11" fill="#fff" stroke="#9aa5ad" /><rect x="2" y="2" width="11" height="8" fill="#6fc3ee" /><path d="M2 7l4-2 7 3v2H2z" fill="#256f63" /></svg>} />
          <NavRow sub text="Музыка" w={43} icon={<svg width="14" height="16" viewBox="0 0 14 16"><ellipse cx="5" cy="12" rx="4" ry="3.200" fill="#2f9be0" /><path d="M8.300 12V1q1 3 4 4.500 1.500 2-.5 5" fill="none" stroke="#2f86c8" strokeWidth="1.500" /></svg>} />
          <div className="h-[21px]" />
          <NavRow text="Компьютер" w={64} icon={<svg width="17" height="15" viewBox="0 0 46 39"><ComputerArt /></svg>} />
          <div className="h-[21px]" />
          <NavRow text="Сеть" w={25} icon={<svg width="17" height="16" viewBox="0 0 48 46"><NetworkArt /></svg>} />
        </div>
        <div className="flex gap-[4px] pl-[15px] pt-[3px]">
          <FileColumn files={leftFiles} />
          <FileColumn files={rightFiles} />
        </div>
        <div className="ml-auto flex w-[17px] flex-col bg-[#f2f2f2]">
          <div className="h-[485px] rounded-[2px] border border-[#979797] bg-[linear-gradient(90deg,#f4f4f4,#e2e2e2_50%,#c4c4c8)]" />
          <div className="flex flex-1 items-center justify-center"><svg width="7" height="4"><path d="M0 0h7L3.500 4z" fill="#444" /></svg></div>
        </div>
      </div>
      <div className="flex flex-1 border-t border-[#c4d6ea] bg-[#f1f4fc] pl-[19px] pt-[8px] text-[#5b6878]">
        <GearWindow w={42} h={35} />
        <div className="-mt-[2px] flex w-[140px] flex-col pl-[16px]">
          <div className="-mt-px flex h-[19px] items-center text-[14px] text-black"><T w={89}>RunIntellect.bat</T></div>
          <div className="flex h-[18px] items-center"><T w={139}>Пакетный файл Windows</T></div>
        </div>
        <div className="-mt-[2px] flex w-[112px] flex-col items-end">
          <div className="flex h-[18px] items-center"><T w={91}>Дата изменения:</T></div>
          <div className="flex h-[18px] items-center"><T w={43}>Размер:</T></div>
        </div>
        <div className="-mt-[2px] flex w-[142px] flex-col pl-[5px] text-[#1c2c4e]">
          <div className="flex h-[18px] items-center"><T w={84}>03.07.2015 16:01</T></div>
          <div className="flex h-[18px] items-center"><T w={41}>89 байт</T></div>
        </div>
        <div className="-mt-[2px] flex h-[18px] items-center gap-[4px]">
          <T w={81}>Дата создания:</T>
          <T w={84} className="text-[#1c2c4e]">03.09.2015 11:58</T>
        </div>
      </div>
    </div>
  );
}

/* ---------- Virtual Serial Port Driver ---------- */

function TreeIcon({ k }: { k: string }) {
  return (
    <svg width="16" height="16" viewBox="0 0 16 16" className="shrink-0">
      {k === "pc" && <g><rect x="2" y="1" width="13" height="10" rx="1" fill="#2a55c8" stroke="#4c5563" /><path d="M3 2h8L4 10H3z" fill="#7ea3f2" /><path d="M1 13h14l-1 2H2z" fill="#c9ccd2" stroke="#666" strokeWidth=".6" /></g>}
      {k === "port" && <g><path d="M5 2h7l3 3v7l-3 3H5l-2-2V4z" fill="#f1f1f1" stroke="#555" /><path d="M6 4v9M9 4v9M12 5v7" stroke="#888" /><path d="M0 10h3" stroke="#222" strokeWidth="2" /></g>}
      {k === "com" && <g><path d="M4 1h11v4H4zM4 11h11v4H4z" fill="#a5a9ae" stroke="#3b3b3b" /><path d="M6 5.500h8v5H6z" fill="#fff" stroke="#2d7ad8" strokeDasharray="1 1" /><path d="M1 14V8h4" stroke="#2d7ad8" strokeWidth="2" fill="none" /></g>}
      {k === "com2" && <g><path d="M5 2h8l2 3v7l-2 3H5z" fill="#8b8f94" stroke="#333" /><path d="M8 4v9M11 4v9" stroke="#d5d5d5" /><path d="M1 2v6h3" stroke="#2d6ad8" strokeWidth="2" fill="none" /></g>}
      {k === "app" && <g><rect x="1.800" y="2" width="12.500" height="12.500" fill="#f3f9ff" stroke="#1e90e8" strokeWidth="1.300" /><path d="M2 3.500h12" stroke="#35a5f5" strokeWidth="3" /><rect x="8.500" y="10.500" width="4" height="2" fill="#fff" stroke="#888" /></g>}
      {k === "user" && <g fill="#2e6fce"><circle cx="8" cy="5" r="3.500" /><path d="M1 14q1-4.500 7-4.500T15 14z" /></g>}
      {k === "sent" && <path d="M2 5.500h6V2.500L14 8 8 13.500v-3H2z" fill="#4d9bea" stroke="#1f62b0" />}
      {k === "recv" && <path d="M14 5.500H8V2.500L2 8l6 5.500v-3h6z" fill="#ef4f57" stroke="#b3151f" />}
      {k === "baud" && <g fill="#7fb2ec" stroke="#1f5aa8"><path d="M1 1.500h4v13H1zM6 6.500h4v8H6zM11 4.500h4v10h-4z" /></g>}
      {k === "pin" && <g stroke="#222" strokeWidth="1.600" fill="none"><path d="M1 12h6M8 5v6M8 5h7M9 12h6" /><circle cx="7.500" cy="12" r="1.500" fill="#f5ee3c" stroke="#555" strokeWidth=".8" /></g>}
    </svg>
  );
}

type Node = [number, string, string, number];
const tree: Node[] = [
  [1, "port", "CNCB0", 38],
  [0, "pc", "Virtual ports", 69],
  [1, "com", "COM10 [9600-N-8-1]", 112],
  [2, "app", "c:\\program files (x86)\\intel", 140],
  [2, "user", "Global", 34],
  [2, "sent", "Sent: 11.2 KBytes", 88],
  [2, "recv", "Received: 55.9 KBytes", 112],
  [2, "baud", "Baudrate emulation: Disab", 139],
  [2, "pin", "Pinout: Standard", 88],
  [1, "com2", "COM11", 41],
  [2, "app", "Port closed", 59],
  [2, "user", "Global", 34],
  [2, "sent", "Sent: 59.9 KBytes", 88],
  [2, "recv", "Received: 4.7 KBytes", 106],
  [2, "baud", "Baudrate emulation: Disab", 139],
  [2, "pin", "Pinout: Standard", 88],
  [0, "pc", "Other virtual ports", 104],
];

function TreeRow({ node }: { node: Node }) {
  const [level, icon, text, w] = node;
  const expandable = text.startsWith("COM") || text === "Virtual ports";
  const last = icon === "pin";
  return (
    <div className="flex h-[18px] shrink-0 items-center">
      {level > 0 && <span className="ml-[12px] h-[18px] w-[19px] border-l border-dotted border-[#8a8a8a]" />}
      {level > 1 && <span className="h-[18px] w-[19px] border-l border-dotted border-[#8a8a8a]" />}
      {level === 0 && <span className="w-[12px]" />}
      {expandable ? (
        <span className="-ml-[4px] flex w-[15px] items-center"><Box open /><span className="w-[6px] border-t border-dotted border-[#8a8a8a]" /></span>
      ) : (
        <span className={`flex h-[18px] w-[11px] items-center ${last ? "" : "border-l border-dotted border-[#8a8a8a]"}`}><span className="w-full border-t border-dotted border-[#8a8a8a]" /></span>
      )}
      <TreeIcon k={icon} />
      <T w={w} className={level === 0 ? "ml-[5px] font-bold" : "ml-[6px]"}>{text}</T>
    </div>
  );
}

function Field({ text }: { text: string }) {
  return <div className="flex h-[20px] w-[90px] items-center border border-[#a9bdd8] bg-white pl-[4px]"><T w={26}>{text}</T></div>;
}

function SerialDriverWindow() {
  return (
    <div className={`absolute left-[214px] top-[480px] flex h-[419px] w-[472px] flex-col rounded-[6px] border border-[#8fa3bd] bg-[#c8dbf3] pl-[2px] ${segoe}`}>
      <div className="flex h-[24px] bg-[linear-gradient(#dbe1ea,#d9e2ee)] pl-[8px]">
        <svg width="14" height="9" viewBox="0 0 14 9" className="mt-[14px]"><path d="M5 0l7 3-1 2-9 1z" fill="#f6f6f6" /><path d="M0 5l13-1v3L1 9z" fill="#76818d" /></svg>
        <div className="flex items-center pl-[150px] pt-[11px] text-[#9b9fa6]"><T w={240}>Virtual Serial Port Driver 8.0 by Eltima Softwar</T></div>
      </div>
      <div className="flex h-[31px] items-center gap-[15px] bg-[#bfdbff] pl-[16px] text-[#15428b]">
        <T w={49} className="underline-offset-2 first-letter:underline">Port pairs</T>
        <T w={42} className="underline-offset-2 first-letter:underline">Options</T>
        <T w={24} className="underline-offset-2 first-letter:underline">Help</T>
      </div>
      <div className="flex h-[341px]">
        <div className="flex w-[239px] flex-col">
          <div className="flex h-[19px] items-center bg-[#b5cde8] pl-[4px] text-[#15428b]"><T w={103}>Serial ports explorer</T></div>
          <div className="flex h-[305px] bg-white pt-[3px]">
            <div className="flex w-[222px] flex-col overflow-hidden text-black">
              {tree.map((n, i) => <TreeRow key={i} node={n} />)}
            </div>
            <div className="-mt-[1px] flex w-[16px] flex-col items-center bg-[#f3f3f3]">
              <div className="flex h-[17px] items-center"><svg width="7" height="4"><path d="M0 4h7L3.500 0z" fill="#444" /></svg></div>
              <div className="mt-[62px] flex h-[192px] w-[15px] flex-col items-center justify-center gap-[2px] rounded-[2px] border border-[#979797] bg-[linear-gradient(90deg,#f4f4f4,#dcdcdc_50%,#c2c2c6)]">
                <i className="h-px w-[7px] bg-[#555]" /><i className="h-px w-[7px] bg-[#555]" /><i className="h-px w-[7px] bg-[#555]" />
              </div>
              <div className="flex flex-1 items-end pb-[9px]"><svg width="7" height="4"><path d="M0 0h7L3.500 4z" fill="#444" /></svg></div>
            </div>
          </div>
          <div className="flex h-[17px] items-center bg-[#f1f1f1] pl-[6px]">
            <svg width="4" height="7"><path d="M4 0v7L0 3.500z" fill="#222" /></svg>
            <div className="ml-[9px] flex h-[15px] w-[82px] items-center justify-center gap-[2px] rounded-[2px] border border-[#979797] bg-[linear-gradient(#f4f4f4,#dcdcdc_50%,#c2c2c6)]">
              <i className="h-[7px] w-px bg-[#555]" /><i className="h-[7px] w-px bg-[#555]" /><i className="h-[7px] w-px bg-[#555]" />
            </div>
            <svg width="4" height="7" className="ml-[111px]"><path d="M0 0v7l4-3.500z" fill="#222" /></svg>
          </div>
        </div>
        <div className="ml-[1px] flex w-[229px] flex-col">
          <div className="flex h-[19px] items-center bg-[#bfdbff] pt-[1px]">
            <svg width="5" height="9" className="ml-[6px]" viewBox="0 0 5 9"><path d="M4.500 .5v8L.5 4.500z" fill="none" stroke="#5a86c0" /></svg>
            <svg width="18" height="18" className="ml-[7px]" viewBox="0 0 18 18"><path d="M18 0Q16 0 14 2L0 18H18z" fill="#fff" /><path d="M0 18L14 2Q16 .5 18 .5" fill="none" stroke="#8db2e3" /></svg>
            <div className="flex h-[18px] w-[94px] items-center border-r border-t border-[#8db2e3] bg-white pl-[12px] font-bold text-black"><T w={72}>Manage ports</T></div>
            <div className="flex h-[17px] flex-1 items-center border-t border-[#9dbce5] bg-[linear-gradient(#e6f0fd,#b4d1f6)] pl-[16px] text-black"><T w={21}>Port</T></div>
          </div>
          <div className="flex flex-1 flex-col bg-[linear-gradient(#f8fbff,#e3edfa_35%,#b9d0ef)] font-['DejaVu_Sans_Condensed','DejaVu_Sans',sans-serif] text-[11px] text-black">
            <div className="mt-[12px] flex h-[13px] items-center pl-[11px]"><T w={157}>VSPD by Eltima can create virtual</T></div>
            <div className="flex h-[13px] items-center pl-[11px]"><T w={162}>so you are not limited to COMx na</T></div>
            <div className="mt-[15px] flex h-[67px] pl-[14px]">
              <div className="w-[48px] pt-[3px]"><SerialPlug kind="add" /></div>
              <div className="flex w-[79px] flex-col"><div className="flex h-[23px] items-center"><T w={48}>First port:</T></div><div className="flex h-[23px] items-center"><T w={62}>Second port:</T></div></div>
              <div className="flex flex-col gap-[3px]">
                <Field text="COM3" />
                <Field text="COM4" />
                <div className="flex items-center gap-[3px] pt-[2px]"><Check /><T w={16}>Cre</T></div>
              </div>
            </div>
            <div className="ml-[6px] mt-[2px] border-t border-dotted border-[#5a3d96]" />
            <div className="mt-[19px] flex h-[98px] pl-[14px] text-[#8f98a6]">
              <div className="w-[48px] pt-[2px]"><SerialPlug kind="edit" /></div>
              <div className="flex flex-col">
                <div className="flex h-[21px] items-start"><span className="w-[79px] leading-[16px]"><T w={48}>First port:</T></span><T w={31} className="font-bold leading-[16px]">no po</T></div>
                <div className="flex h-[27px] items-start"><span className="w-[79px] leading-[16px]"><T w={62}>Second port:</T></span><T w={31} className="font-bold leading-[16px]">no po</T></div>
                <div className="flex h-[23px] items-start gap-[3px] text-[#6d747e]"><Check flat /><T w={94} className="leading-[13px]">Enable strict baudra</T></div>
                <div className="flex h-[23px] items-start gap-[3px] text-[#6d747e]"><Check flat /><T w={94} className="leading-[13px]">Break line/Restore c</T></div>
              </div>
            </div>
            <div className="ml-[6px] border-t border-dotted border-[#5a3d96]" />
            <div className="mt-[15px] flex pl-[14px]">
              <div className="w-[48px]"><SerialPlug kind="del" /></div>
              <div className="flex flex-col leading-[13px]">
                <div className="h-[13px]"><T w={110}>All virtual serial pairs w</T></div>
                <div className="h-[13px]"><T w={110}>removed from your sys</T></div>
                <div className="h-[13px]"><T w={110}>Please, make sure all p</T></div>
                <div className="h-[13px]"><T w={34}>closed.</T></div>
              </div>
            </div>
          </div>
        </div>
      </div>
      <div className="flex flex-1 items-center border-t border-[#4d7cb8] bg-[linear-gradient(#d9e8fb,#c3dafa_35%,#aecdf5_40%,#c9defa)] pl-[4px] text-[#15316b]"><T w={88}>For help press F1</T></div>
    </div>
  );
}

/* ---------- Screen weighing ---------- */

function WeighingWindow() {
  return (
    <div className={`absolute left-[1345px] top-[479px] flex h-[410px] w-[577px] flex-col rounded-t-[6px] border border-[#3c444c] bg-[linear-gradient(#bccbdb,#d6e4f1_30px)] pl-[6px] shadow-[inset_1px_1px_0_#eef4fa] ${segoe}`}>
      <div className="flex h-[29px] items-center pl-[5px] pt-[8px] text-[#4a5663]"><T w={87}>Screen weighing</T></div>
      <div className="flex h-[372px] w-[561px] flex-col items-center bg-[#303030] pt-[8px]">
        <div className="h-[240px] w-[544px] rounded-[6px] border border-black bg-[#595959]" />
        <button className={`mt-[8px] flex h-[52px] w-[544px] items-center justify-center rounded-[2px] border border-[#8a8a8a] pt-[3px] text-[22px] text-black shadow-[inset_0_0_0_1px_#fff] ${btnGrad}`}><T w={43}>{">0<"}</T></button>
        <button className={`mt-[13px] flex h-[46px] w-[150px] items-center justify-center rounded-[2px] border border-[#707070] pt-[2px] text-black shadow-[inset_0_0_0_1px_#fff] ${btnGrad}`}><T w={39}>Update</T></button>
      </div>
    </div>
  );
}

/* ---------- taskbar ---------- */

function TaskButton({ active, children }: { active?: boolean; children: React.ReactNode }) {
  return (
    <div className={`flex h-[39px] w-[59px] items-center justify-center rounded-[3px] border border-[#3f536b] shadow-[inset_0_0_0_1px_#e9f1f9] ${active ? "bg-[radial-gradient(circle_at_50%_20%,#fff2a8,#f7cf5f_45%,#ee9a4d)]" : "bg-[linear-gradient(135deg,#dfe9f4,#b4c8e1_50%,#a9c0dd)]"}`}>
      {children}
    </div>
  );
}

function Taskbar() {
  return (
    <div className={`absolute bottom-0 left-0 flex h-[40px] w-[1920px] items-start border-t border-[#56677c] bg-[linear-gradient(90deg,#8293ab,#8ea1ba_60px,#a6c0de_110px,#a6c0de_1650px,#8092aa_1690px,#8092aa)] shadow-[inset_0_1px_0_#c8d7e8] ${segoe}`}>
      <svg width="38" height="38" viewBox="0 0 38 38" className="ml-[8px] mt-px">
        <defs>
          <radialGradient id="orb" cx=".5" cy=".9" r=".9"><stop offset="0" stopColor="#22dcff" /><stop offset=".45" stopColor="#1f7fae" /><stop offset="1" stopColor="#3c5d78" /></radialGradient>
        </defs>
        <circle cx="19" cy="19" r="18" fill="url(#orb)" stroke="#2a4a66" />
        <path d="M4 14A16 16 0 0 1 34 14Q19 22 4 14z" fill="#cfe0ec" opacity=".35" />
        <path d="M11 11q4-3 8-1l-2 8q-4-2-8 1z" fill="#e8602c" />
        <path d="M20.500 10.500q4 2 8-.5l-2 8q-4 2.500-8 .5z" fill="#8cc63e" />
        <path d="M8.500 20.500q4-3 8-1l-2 8q-4-2-8 1z" fill="#4aa0e8" />
        <path d="M18 20q4 2 8-.5l-2 8q-4 2.500-8 .5z" fill="#fbc72e" />
      </svg>
      <svg width="34" height="34" viewBox="0 0 34 34" className="ml-[26px] mt-[3px]">
        <path d="M28 21A11 11 0 1 1 29 16H11" fill="none" stroke="#1f78cf" strokeWidth="5.500" />
        <path d="M26 9A11 11 0 0 0 9 11" fill="none" stroke="#7cc5f4" strokeWidth="2" />
        <path d="M31 9C35 0 26 0 17 7C6 15 0 27 3 31C5 34 10 31 13 29" fill="none" stroke="#f2b92b" strokeWidth="2.800" />
      </svg>
      <div className="ml-[15px] flex">
        <div className="flex h-[39px] w-[51px] items-center justify-center rounded-[3px] border border-[#3f536b] bg-[linear-gradient(135deg,#e8eff7,#b4c8e1_60%)] shadow-[inset_0_0_0_1px_#e9f1f9]">
          <svg width="32" height="32" viewBox="0 0 32 32">
            <path d="M1 3h9l2 3h19v21H1z" fill="#efd581" stroke="#c3a047" />
            <path d="M3 2h6v2H3zM20 5h8v2h-8z" fill="#3fae49" />
            <path d="M11 4h8v2h-8z" fill="#d94a35" />
            <path d="M1 9h30v18H1z" fill="#fbe9a6" />
            <path d="M5 18h22v13h-6v-8H11v8H5z" fill="#9fd4f0" stroke="#4f9bc9" />
          </svg>
        </div>
        <span className="h-[39px] w-[4px] rounded-r-[3px] border border-l-0 border-[#5a6e88] bg-[#b8cce4]" />
        <span className="h-[39px] w-[4px] rounded-r-[3px] border border-l-0 border-[#7d92ae] bg-[#b0c6e0]" />
      </div>
      <svg width="30" height="30" viewBox="0 0 30 30" className="ml-[18px] mt-[5px]">
        <path d="M12 2L26 4V26L12 28z" fill="#7fb8dc" stroke="#4f8db5" />
        <path d="M1 3h20v24H1z" fill="#8fc4e4" stroke="#5d9cc4" />
        <circle cx="11" cy="14.500" r="9.500" fill="#f07a24" stroke="#fff" strokeWidth=".8" />
        <path d="M8 9v11l8.500-5.500z" fill="#fff" />
      </svg>
      <div className="ml-[17px] flex gap-[3px]">
        <TaskButton><ChromeLogo s={29} /></TaskButton>
        <TaskButton>
          <svg width="30" height="26" viewBox="0 0 30 26">
            <rect x=".5" y=".5" width="29" height="25" fill="#f5f7f9" stroke="#8794a1" />
            <path d="M1 1h28v4H1z" fill="#c5ced6" /><rect x="3" y="6" width="12" height="16" fill="#4a9c86" /><rect x="3" y="6" width="12" height="7" fill="#4c86bf" />
            <path d="M17 8h6M17 11h6M17 14h6M17 17h6M17 20h6" stroke="#aab3bb" /><rect x="25" y="6" width="2" height="9" fill="#2e66ae" />
          </svg>
        </TaskButton>
        <TaskButton><svg width="30" height="30" viewBox="0 0 46 42"><SerialArt /></svg></TaskButton>
        <TaskButton>
          <svg width="32" height="34" viewBox="0 0 32 34">
            <linearGradient id="npp" x1="0" y1="0" x2="0" y2="1"><stop offset=".25" stopColor="#fff" /><stop offset="1" stopColor="#6cc71c" /></linearGradient>
            <rect x="3" y="3" width="23" height="30" fill="url(#npp)" stroke="#666" />
            <path d="M4 3h21" stroke="#333" strokeWidth="2" strokeDasharray="1.500 2" />
            <path d="M8.500 24V13h3.500v11" fill="none" stroke="#222" strokeWidth="1.500" />
            <path d="M14 17h4M16 15v4M19 17h4M21 15v4" stroke="#222" strokeWidth="1.200" />
            <path d="M29 1l2 1.500L22 28l-3 3 .5-4z" fill="#f2b33c" stroke="#8e5a13" strokeWidth=".7" /><path d="M29 0l3 1.500-1 3-3-1.500z" fill="#c43e3e" />
          </svg>
        </TaskButton>
        <TaskButton active><TcLogo s={33} /></TaskButton>
      </div>
      <div className="ml-auto flex h-[39px] items-start text-white">
        <div className="pt-[8px]"><T w={15}>EN</T></div>
        <svg width="9" height="5" className="ml-[16px] mt-[18px]" viewBox="0 0 9 5"><path d="M4.500 .5L9 5H0z" fill="#fff" stroke="#55647a" strokeWidth=".6" /></svg>
        <svg width="17" height="17" className="ml-[11px] mt-[12px]" viewBox="0 0 17 17"><path d="M1 5h3l5-4v14l-5-4H1z" fill="#f4f4f4" stroke="#4c5a6c" /><circle cx="11.500" cy="11" r="4.500" fill="#fff" stroke="#d92020" strokeWidth="1.800" /><path d="M8.500 8l6 6" stroke="#d92020" strokeWidth="1.600" /></svg>
        <svg width="17" height="17" className="ml-[7px] mt-[12px]" viewBox="0 0 17 17"><path d="M2 1v15" stroke="#fff" strokeWidth="2" /><path d="M3.500 2q3-1.500 5 0t5 0v7q-3 1.500-5 0t-5 0z" fill="#fff" stroke="#4c5a6c" strokeWidth=".7" /><circle cx="11.500" cy="11" r="4.800" fill="#db2a20" /><path d="M9.500 9l4 4m0-4l-4 4" stroke="#fff" strokeWidth="1.600" /></svg>
        <svg width="17" height="17" className="ml-[7px] mt-[12px]" viewBox="0 0 17 17"><rect x="5.500" y="3.500" width="10" height="8" fill="#6d8098" stroke="#fff" strokeWidth="1.300" /><path d="M7 14.500h8M11 12v2" stroke="#fff" strokeWidth="1.500" /><path d="M1.500 1v5h4V1M3.500 6v6" stroke="#fff" strokeWidth="1.400" fill="none" /></svg>
        <div className="ml-[16px] flex w-[57px] flex-col items-center pt-[3px]">
          <div className="h-[17px] leading-[17px]"><T w={28}>17:09</T></div>
          <div className="h-[17px] leading-[17px]"><T w={55}>03.09.2015</T></div>
        </div>
        <div className="ml-[11px] h-[39px] w-[14px] border border-[#4a5a70] bg-[linear-gradient(160deg,#b3c1d2,#6e8098_50%,#8598b0)]" />
      </div>
    </div>
  );
}

export default function App() {
  return (
    <div className="relative h-[1080px] w-[1920px] overflow-hidden bg-black">
      <Desktop />
      <BackExplorer />
      <SerialDriverWindow />
      <MainExplorer />
      <WeighingWindow />
      <Taskbar />
      <IntellectWindow />
      <TestRunnerWidget />
      <svg width="14" height="21" viewBox="0 0 14 21" className="absolute left-[940px] top-[580px]">
        <path d="M.7 1V16.500L4.300 13.200 7 19.300 9.500 18.200 6.900 12.300H11.800z" fill="#fff" stroke="#222" strokeWidth="1.100" />
      </svg>
    </div>
  );
}
